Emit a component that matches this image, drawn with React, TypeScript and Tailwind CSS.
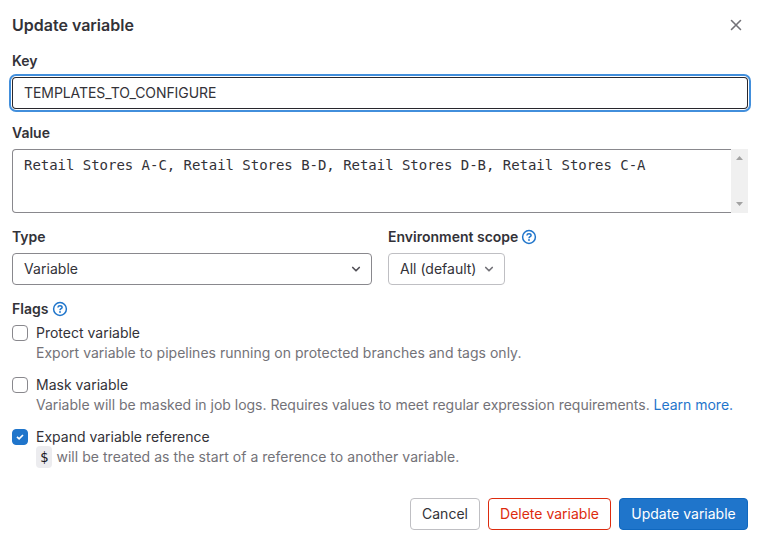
import type { ReactNode } from "react";

function Chevron({ className = "" }: { className?: string }) {
  return (
    <svg viewBox="0 0 16 16" className={`h-4 w-4 shrink-0 ${className}`} fill="none" stroke="currentColor" strokeWidth="1.7" strokeLinecap="round" strokeLinejoin="round">
      <path d="M4.75 6.5 8 9.75l3.25-3.25" />
    </svg>
  );
}

function Help() {
  return (
    <svg viewBox="0 0 16 16" className="h-4 w-4 shrink-0 text-[#1f75cb]" fill="none" stroke="currentColor" strokeWidth="1.5">
      <circle cx="8" cy="8" r="6.4" />
      <path d="M5.9 6.5C6 5.300 6.800 4.700 8 4.700C9.200 4.700 10.100 5.400 10.100 6.400C10.100 7.800 8 7.700 8 9.300" />
      <circle cx="8" cy="11" r="0.9" fill="currentColor" stroke="none" />
    </svg>
  );
}

function Flag({ title, checked = false, children }: { title: string; checked?: boolean; children: ReactNode }) {
  return (
    <div className="flex h-10 items-start gap-2">
      <button
        role="checkbox"
        aria-checked={checked}
        aria-label={title}
        className={`mt-0.5 flex h-4 w-4 shrink-0 items-center justify-center rounded-[4px] border ${checked ? "border-[#1f75cb] bg-[#1f75cb]" : "border-[#89888d] bg-white"}`}
      >
        {checked && (
          <svg viewBox="0 0 8 8" className="h-2 w-2 shrink-0" fill="none" stroke="white" strokeWidth="1.7">
            <path d="M1 3.900 3.100 5.900 7 2" />
          </svg>
        )}
      </button>
      <div className="whitespace-nowrap leading-5">
        <div>{title}</div>
        <div className="text-[#737278]">{children}</div>
      </div>
    </div>
  );
}

export default function App() {
  return (
    <main className="h-[545px] w-[759px] overflow-hidden bg-white pl-3 pr-[11px] font-['Inter',sans-serif] text-[14px] leading-5 text-[#333238]">
      <header className="flex h-[51px] items-center justify-between pb-[2px]">
        <h1 className="text-[16px] font-semibold">Update variable</h1>
        <button aria-label="Close" className="mr-1 text-[#737278]">
          <svg viewBox="0 0 16 16" className="h-4 w-4" fill="none" stroke="currentColor" strokeWidth="1.6" strokeLinecap="round">
            <path d="m3.500 3.500 9 9m0-9-9 9" />
          </svg>
        </button>
      </header>

      <label className="block font-semibold">Key</label>
      <div className="mt-1.5 flex h-8 items-center rounded-[4px] bg-white px-3 tracking-[-0.07px] shadow-[inset_0_0_0_1px_#28272d,0_0_0_1px_#fff,0_0_0_3px_#428fdc]">
        TEMPLATES_TO_CONFIGURE
      </div>

      <label className="mt-[14px] block font-semibold">Value</label>
      <div className="mt-1.5 flex h-16 justify-between overflow-hidden rounded-l-[4px] shadow-[inset_0_0_0_1px_#89888d]">
        <div className="whitespace-pre pl-3 pt-1.5 font-['DejaVu_Sans_Mono',monospace] text-[14px] tracking-[-0.03px]">Retail Stores A-C, Retail Stores B-D, Retail Stores D-B, Retail Stores C-A</div>
        <div className="flex w-[17px] flex-col items-center justify-between bg-[#f0f0f0] py-[7px] text-[#a3a3a3]">
          <svg viewBox="0 0 7 4" className="h-1 w-[7px]" fill="currentColor"><path d="M3.500 0 7 4H0z" /></svg>
          <svg viewBox="0 0 7 4" className="h-1 w-[7px]" fill="currentColor"><path d="M0 0h7L3.500 4z" /></svg>
        </div>
      </div>

      <div className="mt-[14px] flex gap-4">
        <div>
          <label className="block font-semibold">Type</label>
          <div className="mt-1.5 flex h-8 w-[360px] items-center justify-between rounded-[4px] border border-[#89888d] pl-[11px] pr-[7px] tracking-[0.05px]">
            Variable
            <Chevron className="text-[#535158]" />
          </div>
        </div>
        <div>
          <div className="flex items-center gap-[3px] font-semibold"><span>Environment scope</span><Help /></div>
          <button className="mt-1.5 flex h-8 w-[117px] items-center justify-between whitespace-nowrap rounded-[4px] border border-[#bfbfc3] pl-[11px] pr-[7px]">
            All (default)
            <Chevron className="text-[#737278]" />
          </button>
        </div>
      </div>

      <div className="mt-[14px] flex items-center gap-1 font-semibold"><span>Flags</span><Help /></div>
      <div className="mt-1 flex flex-col gap-3">
        <Flag title="Protect variable"><span className="tracking-[0.015px]">Export variable to pipelines running on protected branches and tags only.</span></Flag>
        <Flag title="Mask variable">
          <span className="tracking-[-0.017px]">Variable will be masked in job logs. Requires values to meet regular expression requirements. <a className="text-[#1f75cb]">Learn more.</a></span>
        </Flag>
        <Flag title="Expand variable reference" checked>
          <code className="rounded-[4px] bg-[#ececef] px-1 py-[3px] font-['DejaVu_Sans_Mono',monospace] text-[14px] text-[#18171d]">$</code><span className="tracking-[0.04px]"> will be treated as the start of a reference to another variable.</span>
        </Flag>
      </div>

      <footer className="mt-[31px] flex justify-end gap-2 whitespace-nowrap">
        <button className="h-8 w-[70px] rounded-[4px] border border-[#bfbfc3]">Cancel</button>
        <button className="h-8 w-[123px] rounded-[4px] border border-[#dd2b0e] text-[#dd2b0e]">Delete variable</button>
        <button className="h-8 w-[129px] rounded-[4px] border border-[#1068bf] bg-[#1f75cb] text-white">Update variable</button>
      </footer>
    </main>
  );
}
